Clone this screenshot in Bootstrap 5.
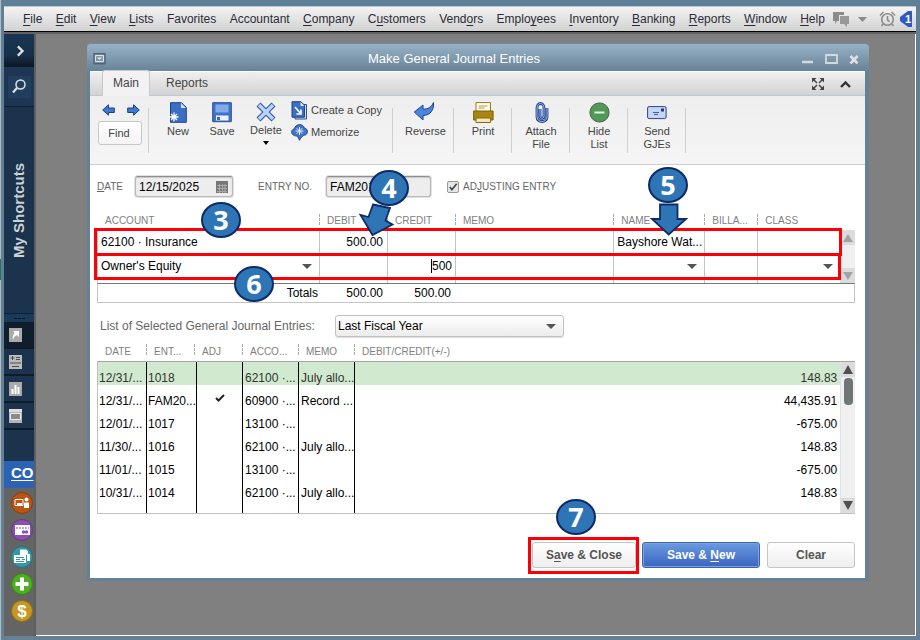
<!DOCTYPE html>
<html lang="en">
<head>
<meta charset="utf-8">
<meta name="viewport" content="width=device-width, initial-scale=1">
<title>Make General Journal Entries</title>
<link href="https://cdn.jsdelivr.net/npm/bootstrap@5.3.0/dist/css/bootstrap.min.css" rel="stylesheet">
<style>
body{font-family:"Liberation Sans",Arial,sans-serif;font-size:12px;line-height:14px;color:#000;background:#668196}
button,input,select{font-family:inherit;color:inherit}
svg{display:block;flex:none}
.app{min-height:100vh;padding:6px 4px 4px 4px;background:linear-gradient(#5d7f97,#668196) 1px 0 no-repeat,linear-gradient(#b9bcbf 259px,#1f7a45 259px 280px,#b9bcbf 280px)}
.menubar{height:26px;border-top:1px solid #bcc8d0;border-bottom:1px solid #000;background:linear-gradient(#f3f3f3,#d2d2d2);padding-left:19px;padding-right:4px}
.menubar nav{margin-right:8px}
.menubar a{color:#2c2c36;text-decoration:none}
.menubar a u,.btn u{text-underline-offset:2px}
.workspace{background:#808080;border-top:2px solid #636363}
.rail{width:32px;background:#646464;border-right:2px solid #5f5f5f}
.rail button{border:0;padding:0;color:#dde3e4;background:none;width:100%}
.rail .openbtn{height:33px;background:linear-gradient(#1b3552,#172f48 65%,#0b1722)}
.rail .findbtn{height:40px;background:#1c3653;border-bottom:1px solid #101f2e}
.findbtn span{width:23px;height:22px;background:#213e5f}
.rail .panel{background:#1b334d}
.vlabel{writing-mode:vertical-rl;transform:rotate(180deg);font-weight:700;font-size:15px;line-height:20px;color:#ccd1d5;height:206px;width:30px}
.grip{height:9px;background:#1a3a5c;border-top:1px solid #101f2e}
.rail .tool{height:27px;border-bottom:2px solid #0e1c2a;padding-left:5px}
.rail .tool.current{background:#101d2c}
.spacer{height:31px}
.co{height:27px;background:#2c62b4;color:#fff!important;font-weight:700;font-size:15px;line-height:24px;padding-left:7px;overflow:hidden;text-underline-offset:2px}
.rail .round{height:27px;padding:2px 0 0 7px}
.desk{padding:9px 45px 52px 51px;border-right:1px solid #fff;border-bottom:1px solid #fff}
.win{background:#fff;border:3px solid #668196;border-top:0;border-right-width:4px;border-radius:4px 4px 0 0;margin-right:1px}
.titlebar{margin:0 -4px 0 -3px;height:28px;border-top:1px solid #6f8ca3;border-radius:4px 4px 0 0;background:linear-gradient(#98b1c6,#678397);color:#fff;font-size:13px;padding:3px 10px 0 6px}
.titlebar button,.tabrow .mini{border:0;background:none;padding:0}
.titlebar .ctl{gap:11px;width:57px}
.tabrow{height:25px;background:linear-gradient(#efefef,#d3d3d3);border-top:1px solid #fff;border-bottom:1px solid #bcc7d4;padding:0 14px 0 12px}
.tabrow .nav-link{color:#444;padding:5px 15px 5px;line-height:14px;border:1px solid transparent;border-bottom:0}
.tabrow .nav-link.active{background:#f2f2f2;border-color:#c9c9c9;border-radius:3px 3px 0 0;padding:5px 10px 6px;color:#444;margin-bottom:-1px}
.ribbon{height:69px;background:linear-gradient(#eee,#f5f5f5);border-bottom:1px solid #cfcfcf;font-size:11px;line-height:13px;color:#444}
.ribbon .grp{height:69px;padding-top:6px;position:relative;flex:none}
.ribbon .grp::after{content:"";border-right:1px solid #cfcfcf;height:45px;margin-top:6px;position:absolute;right:0;top:6px}
.ribbon button{border:0;background:none;padding:0;text-align:center;display:flex;flex-direction:column;align-items:center}
.ribbon .item{width:44px}
.ribbon .item svg,.ribbon .one svg{margin-bottom:2px}
.ribbon .find{border:1px solid #c6c6c6;border-radius:3px;background:linear-gradient(#fff,#f4f4f4);width:44px;height:24px;justify-content:center;padding-right:2px}
.ribbon .arrows{padding:2px 9px 5px 4px}
.ribbon .side{flex-direction:row;gap:3px;height:22px}
.ribbon .pair{padding-left:3px;margin-top:-3px}
.w59{width:59px}.w244{width:244px;padding-left:7px}.w61{width:61px}.w58{width:58px}
.body{position:relative;padding:11px 10px 10px 7px}
.cap{font-size:10px;line-height:12px;color:#666}
.fld{border:1px solid #b9b9b9;border-top-color:#8f8f8f;border-radius:3px;background:#ededed;box-shadow:inset 0 1px 1px #c8c8c8,0 0 0 1px #e2e2e2;font-size:12px;height:21px;padding:0 3px;line-height:16px}
.datefld{width:98px}.nofld{width:105px}
.datelab{width:38px}.nolab{margin-left:25px;width:68px}
.cal{right:5px;top:5px}
.tick{appearance:none;width:12px;height:12px;margin:0;border:1px solid #999;border-radius:2px;background:#e6e6e6 url("data:image/svg+xml,%3Csvg xmlns='http://www.w3.org/2000/svg' viewBox='0 0 12 12'%3E%3Cpath d='M2.5 6l2.3 3L10 2.5' fill='none' stroke='%23444' stroke-width='1.8'/%3E%3C/svg%3E") center/11px}
.gridt{table-layout:fixed;width:100%;border-collapse:separate;border-spacing:0}
.gridt th{font-weight:400;font-size:10px;line-height:12px;color:#808080;padding:0 0 0 7px;position:relative;white-space:nowrap;vertical-align:top}
.gridt th+th::before{content:"";position:absolute;left:-1px;top:0;height:11px;border-left:1px dashed #aaa}
.gridt td{overflow:hidden;white-space:nowrap;padding:0}
.entrywrap{margin-top:17px}
.entry td{border-right:1px solid #c4c4c4;padding:0 3px;height:24px}
.entry td:first-child{border-left:1px solid #c4c4c4}
.entry td:last-child{border-right:0}
.entry .stub td{height:5px;line-height:0;border-top:1px solid #777}
.entry .head th{height:16px;padding-top:1px}
.entry .head th:first-child{padding-left:8px}
.pick{position:relative;display:block}
.pick::after{content:"";position:absolute;right:4px;top:50%;margin-top:-2px;border:5px solid transparent;border-top-color:#555;border-bottom:0;pointer-events:none}
.pick select,.amt{appearance:none;border:0;background:none;padding:0;width:100%;font-size:12px;line-height:14px;height:18px;outline:0}
.amt{background:linear-gradient(#000,#000) right 20px center/1px 14px no-repeat}
.sb{background:#f0f0f0;width:15px}
.sb button{border:0;padding:0;background:#dcdcdc;width:100%;height:15px;display:flex;align-items:center;justify-content:center}
.entrywrap .sb{margin-top:16px}
.totals{border:1px solid #c4c4c4;border-top-color:#777;height:20px;line-height:18px}
.totals span{text-align:right;flex:none}
.t1{width:221px;padding-right:1px}.t2{width:64px}.t3{width:68px}
.rangerow{padding:12px 0 7px 3px}
.listlab{color:#666;font-size:12px;width:235px}
.range{width:229px}
.range select{border:1px solid #c2c2c2;border-radius:3px;background:linear-gradient(#fff,#ececec);height:22px;padding:0 2px;box-shadow:0 1px 1px #ddd}
.range::after{right:8px}
.listhead{height:17px}
.gridt.listhead th{padding-top:2px}
.listhead th:first-child{padding-left:8px}
.journal{border:1px solid #c0c0c0;border-top-color:#a5a5a5;border-right:0}
.journal td{height:23px;padding:9px 1px 0;border-left:1px solid #000}
.journal td:first-child{border-left:0}
.journal td:last-child{padding-right:3px}
.journal .picked td{background:#d1e9cf;color:#333}
.journal td:nth-child(2),.journal td:nth-child(4),.journal td:nth-child(5){padding-left:2px}
.journal td:nth-child(2){padding-right:0;padding-left:1px}
.journal .chk{padding-top:2px}
.journal .tail td{height:13px;padding:0}
.thumb{width:9px;height:27px;border-radius:4px;background:#6f7775;margin:1px auto 0}
.foot{padding-top:28px;gap:6px}
.foot .btn{font-size:12px;font-weight:700;line-height:14px;height:26px;padding:0;border-radius:3px;border:1px solid #c5c5c5;color:#555;background:linear-gradient(#fff,#eee)}
.foot .btn.go{width:118px;color:#fff;border-color:#3c64a4;background:linear-gradient(#6a9be0,#3a63c0);box-shadow:inset 0 0 0 1px #79a3e4}
.foot .w104{width:104px}.foot .w88{width:88px;margin-left:1px}
.redbox{position:absolute;border:3px solid #fb0007;pointer-events:none}
.r1{left:4px;right:23px;top:63px;height:28px}
.r2{left:4px;right:24px;top:88px;height:27px}
.r3{inset:-5px -3px -6px -4px}
.step{position:absolute;width:40px;height:36px;border-radius:50%;border:2px solid #0f2b66;background:#2e75b6;color:#fff;font:700 27px/32px "Open Sans","Noto Sans",sans-serif;text-align:center}
.s3{left:111px;top:37px}.s4{left:279px;top:5px}.s5{left:558px;top:2px}.s6{left:144px;top:101px}.s7{left:466px;top:334px}
.arr{position:absolute;overflow:visible}
.a4{left:269px;top:38px}.a5{left:561px;top:38px}
</style>
</head>
<body>
<div class="app d-flex flex-column">
<header class="menubar d-flex align-items-center">
<nav class="d-flex flex-grow-1 justify-content-between" aria-label="Main menu">
<a href="#"><u>F</u>ile</a><a href="#"><u>E</u>dit</a><a href="#"><u>V</u>iew</a><a href="#"><u>L</u>ists</a><a href="#">Favorites</a><a href="#">Accountant</a><a href="#"><u>C</u>ompany</a><a href="#">C<u>u</u>stomers</a><a href="#">Vend<u>o</u>rs</a><a href="#">Emplo<u>y</u>ees</a><a href="#"><u>I</u>nventory</a><a href="#"><u>B</u>anking</a><a href="#"><u>R</u>eports</a><a href="#"><u>W</u>indow</a><a href="#"><u>H</u>elp</a>
</nav>
<div class="d-flex align-items-center">
<svg width="17" height="15" viewBox="0 0 17 15"><path d="M0 0h11v3H6v6H4l-2 3V9H0z" fill="#8b8b8b"/><path d="M7 4h9v8h-2v3l-3-3H7z" fill="#999"/></svg>
<svg class="ms-2 me-2" width="9" height="5" viewBox="0 0 9 5"><path d="M0 0h9L4.500 5z" fill="#8b8b8b"/></svg>
<svg class="ms-1" width="17" height="16" viewBox="0 0 17 16" fill="none" stroke="#8e8e8e" stroke-width="1.600"><circle cx="8.500" cy="8.500" r="5.800"/><path d="M8.500 5v4l2 1.500M1 4.500L4.500 1M16 4.500L12.500 1M4 13l-1.500 2M13 13l1.500 2"/></svg>
<svg class="ms-1" width="12" height="16" viewBox="0 0 12 16"><path d="M12 0H8L0 6v4l8 6h4z" fill="#3158c0"/><text x="5" y="12" fill="#fff" font-size="11" font-weight="700">1</text></svg>
</div>
</header>
<div class="workspace d-flex flex-grow-1">
<aside class="rail d-flex flex-column flex-shrink-0">
<button class="openbtn d-flex align-items-center justify-content-center" aria-label="Expand"><svg width="14" height="14" viewBox="0 0 12 12"><path d="M5 2l4 4-4 4" fill="none" stroke="#dfe3df" stroke-width="2"/></svg></button>
<button class="findbtn d-flex align-items-center justify-content-center" aria-label="Search"><span class="d-flex align-items-center justify-content-center"><svg width="14" height="15" viewBox="0 0 14 15" fill="none" stroke="#dfe3df"><circle cx="8.500" cy="5.500" r="4.500" stroke-width="1.500"/><path d="M5 9l-4 4.500" stroke-width="2.200"/></svg></span></button>
<div class="panel"><div class="vlabel d-flex align-items-center justify-content-center"><span>My Shortcuts</span></div>
<div class="grip d-flex justify-content-center align-items-center"><svg width="11" height="3"><path d="M0 1.500h11" stroke="#071626" stroke-width="1" stroke-dasharray="3 1"/></svg></div>
<button class="tool current d-flex align-items-center" aria-label="Shortcuts"><svg width="13" height="14"><path fill="#aaa" d="M0 0h13v14H0z"/><path d="M4 3h6v6L8 7.200Q5 8 4 12 3 8 5.600 5z" fill="#fff"/></svg></button>
<button class="tool d-flex align-items-center" aria-label="Balances"><svg width="13" height="14"><path fill="#bbb" d="M0 0h13v14H0z"/><path d="M1.500 3h4M3.500 1v4M7 2.500h4M7 4.500h4M1 8h11M3 11.500h7" stroke="#4c4c4c"/></svg></button>
<button class="tool d-flex align-items-center" aria-label="Reports"><svg width="13" height="14"><path fill="#aaa" d="M0 0h13v14H0z"/><path d="M3.500 12V7M6.500 12V3M9.500 12V5" stroke="#fff" stroke-width="2"/></svg></button>
<button class="tool d-flex align-items-center" aria-label="Open windows"><svg width="13" height="14"><path fill="#b5b5b5" d="M0 0h13v14H0z"/><path d="M1.500 4.500h10v6h-10z" fill="#8a8a8a" stroke="#eee"/><path d="M0 0h13v3H0z" fill="#ddd"/></svg></button>
<div class="spacer"></div></div>
<a href="#" class="co d-block">CO</a>
<button class="round d-flex align-items-center" aria-label="Payroll"><svg width="22" height="22" viewBox="0 0 22 22"><circle cx="11" cy="11" r="10.500" fill="#bd5412" stroke="#8d3c0a"/><path d="M4 7.500h8v6H4z" fill="none" stroke="#fff"/><path d="M6 11h5v2H6z" fill="#fff"/><circle cx="15.500" cy="7.500" r="2" fill="#fff"/><path d="M13 10.500h5V16h-5z" fill="#fff"/></svg></button>
<button class="round d-flex align-items-center" aria-label="Card payments"><svg width="22" height="22" viewBox="0 0 22 22"><circle cx="11" cy="11" r="10.500" fill="#8b4fb0" stroke="#6a3690"/><path d="M4 6h15v10H4z" fill="#fff"/><path d="M5 9h13" stroke="#8b4fb0" stroke-dasharray="2 1"/><circle cx="12.500" cy="13" r="1.700" fill="#8b4fb0"/><circle cx="15.500" cy="13" r="1.700" fill="#8b4fb0"/></svg></button>
<button class="round d-flex align-items-center" aria-label="Checks"><svg width="22" height="22" viewBox="0 0 22 22"><circle cx="11" cy="11" r="10.500" fill="#3698a5" stroke="#24737e"/><path d="M9 8V3.500h6l2 2V8h2v7h-3V9H9z" fill="#fff"/><path d="M3 9h12v8H3z" fill="#fff"/><path d="M5 11.500h8M5 13.500h4m2 0h3M5 15.500h8" stroke="#3698a5"/></svg></button>
<button class="round d-flex align-items-center" aria-label="Add"><svg width="22" height="22" viewBox="0 0 22 22"><circle cx="11" cy="11" r="10.500" fill="#4cae20" stroke="#378414"/><path d="M11 4.500v13M4.500 11h13" stroke="#fff" stroke-width="4"/></svg></button>
<button class="round d-flex align-items-center" aria-label="Money"><svg width="22" height="22" viewBox="0 0 22 22"><circle cx="11" cy="11" r="10.500" fill="#c69822" stroke="#947013"/><text x="11" y="17" text-anchor="middle" font-size="17" font-weight="700" fill="#fff">$</text></svg></button>
</aside>
<main class="desk flex-grow-1">
<section class="win">
<div class="titlebar d-flex align-items-center">
<button aria-label="Window menu"><svg width="13" height="12" viewBox="0 0 13 12"><path d="M1 .7h11v10H1z" fill="none" stroke="#4f6576" stroke-width="1.400"/><path d="M2.500 2.500h8v6h-8z" fill="none" stroke="#e0e4e8"/><path d="M4 4.500h5L6.500 7z" fill="#e0e4e8"/></svg></button>
<div class="flex-grow-1 text-center">Make General Journal Entries</div>
<div class="ctl d-flex align-items-center justify-content-between">
<button aria-label="Minimize"><svg width="11" height="10"><path d="M0 8h11" stroke="#d6d9dc" stroke-width="2.500"/></svg></button>
<button aria-label="Maximize"><svg width="13" height="10"><path d="M1 1h11v8H1z" fill="none" stroke="#d6d9dc" stroke-width="1.800"/></svg></button>
<button aria-label="Close"><svg width="10" height="9" viewBox="0 0 10 9"><path d="M1.500 1l7 7.500M8.500 1l-7 7.500" stroke="#dfe1e3" stroke-width="2.600"/></svg></button>
</div></div>
<div class="tabrow d-flex align-items-end">
<div class="nav" role="tablist"><a class="nav-link active" href="#">Main</a><a class="nav-link" href="#">Reports</a></div>
<div class="ms-auto d-flex align-items-center h-100 gap-3">
<button class="mini" aria-label="Full screen"><svg width="12" height="12" viewBox="0 0 12 12" fill="#444"><path d="M0 0h4.500L0 4.500zM12 0v4.500L7.500 0zM0 12V7.500L4.500 12zM12 12H7.500L12 7.500z"/><path d="M1 1l4 4M11 1L7 5M1 11l4-4M11 11L7 7" stroke="#444" stroke-width="1.500"/></svg></button>
<button class="mini" aria-label="Collapse"><svg width="11" height="8" viewBox="0 0 11 8"><path d="M1 7l4.500-4.500L10 7" fill="none" stroke="#333" stroke-width="2.400"/></svg></button></div>
</div>
<div class="ribbon d-flex">
<div class="grp w59 ps-2">
<div class="arrows d-flex justify-content-between"><button aria-label="Previous"><svg width="13" height="12" viewBox="0 0 13 12"><path d="M.7 6L6.500.8V4h5.800v4.500H6.500v2.700z" fill="#3f7ad0" stroke="#1d3f86"/></svg></button><button aria-label="Next"><svg width="13" height="12" viewBox="0 0 13 12"><path d="M12.300 6L6.500.8V4H.7v4.500h5.800v2.700z" fill="#3f7ad0" stroke="#1d3f86"/></svg></button></div>
<button class="find">Find</button></div>
<div class="grp w244 d-flex align-items-start">
<button class="item"><svg width="18" height="21" viewBox="0 0 18 21"><path d="M1.500.7h11l4.800 4.800v14.800H1.500z" fill="#3b6fc4" stroke="#1f4187"/><path d="M12 1v5h5z" fill="#cfe0f8"/><path d="M5 10.500v9M.5 15h9M2 12l6 6M8 12l-6 6" stroke="#fff" stroke-width="1.300"/></svg>New</button>
<button class="item"><svg width="20" height="21" viewBox="0 0 20 21"><path d="M.7.7h18.600v19H.7z" fill="#3f73ca" stroke="#2b4f96"/><path d="M3.500 2.500h13v8h-13z" fill="#83abea"/><path d="M4 13.500h12.500v5H4z" fill="#eef3fb"/><path d="M5 15h3v3H5z" fill="#3a65b5"/></svg>Save</button>
<button class="item"><svg width="20" height="20" viewBox="0 0 20 20"><path d="M2.500 2.500l15 15M17.500 2.500l-15 15" stroke="#2b50a0" stroke-width="5.600"/><path d="M3 3l14 14M17 3L3 17" stroke="#b9d4fa" stroke-width="3.600"/></svg>Delete<svg width="6" height="4" class="mt-1"><path d="M0 0h6L3 4z" fill="#000"/></svg></button>
<div class="pair">
<button class="side"><svg width="17" height="19" viewBox="0 0 17 19"><path d="M4 3.500h11.500v14.500H4z" fill="#d7e3f7" stroke="#2b4f96"/><path d="M1 .7h9l3.500 3.500v12H1z" fill="#3b6fc4" stroke="#1f4187"/><path d="M9.500 1v4h4z" fill="#dce8fa"/><path d="M4 6l6 7M10 8.500V13H5.500" stroke="#fff" stroke-width="1.600" fill="none"/></svg>Create a Copy</button>
<button class="side"><svg width="17" height="17" viewBox="0 0 17 17"><path d="M8 .8c3-.5 5 1.200 5.200 3.200 3 .5 4 3.300 2.800 5.300-.7 1.600-2.200 2-3.500 2-1 1.700-3 2.500-4 5-1-2-1-3.500-3-4.300C2.500 12 .3 10 .7 7.500 1 5.500 2.700 5 3.500 4.500 4 2 6 .8 8 .8z" fill="#3f73c6" stroke="#24468c"/><path d="M8.500 3v8M4.500 7h8M5.700 4.200l5.600 5.600M11.300 4.200L5.700 9.800" stroke="#eaf2ff"/></svg>Memorize</button></div></div>
<div class="grp w61"><button class="one w-100"><svg width="22" height="21" viewBox="0 0 22 21"><path d="M.8 11L9.500 4v4c5 .5 8.500-2 10.500-6.500.8 7-3 13-10.500 13V19z" fill="#4a84dc" stroke="#1d428c" transform="translate(.5 -1)"/></svg><span class="ps-1">Reverse</span></button></div>
<div class="grp w58"><button class="one w-100"><svg width="21" height="21" viewBox="0 0 21 21"><path d="M3 .6h14.500V10H3z" fill="#fffdf2" stroke="#9a7a12"/><path d="M5.500 4h9M5.500 6h6" stroke="#b99b35"/><path d="M.6 9h19.500v9H.6z" fill="#a98612" stroke="#7d6008"/><path d="M3 16h14.500v4.500H3z" fill="#f3e6b8" stroke="#8a6b0a"/></svg>Print</button></div>
<div class="grp w58"><button class="one w-100"><svg width="15" height="21" viewBox="0 0 15 21" fill="none"><g stroke="#1e3f8b" stroke-width="2.800"><path d="M13 6v9c0 6-10 6-10 0V6c0-6 7-6 7 0v8c0 3-4 3-4 0V7"/></g><path d="M13 6v9c0 6-10 6-10 0V6c0-6 7-6 7 0v8c0 3-4 3-4 0V7" stroke="#9fc0f4" stroke-width="1"/></svg>Attach<br>File</button></div>
<div class="grp w58"><button class="one w-100"><svg width="21" height="21" viewBox="0 0 21 21"><circle cx="10.500" cy="10.500" r="9.600" fill="#4f9a55" stroke="#555c55"/><path d="M5.500 10.500h10" stroke="#e4f2e2" stroke-width="2"/></svg>Hide<br>List</button></div>
<div class="grp w58"><button class="one w-100"><svg width="20" height="21" viewBox="0 0 20 21"><rect x=".6" y="4.600" width="18.500" height="12" rx="1.500" fill="#c4d5f5" stroke="#2d4582"/><path d="M14 6.500h3v3h-3z" fill="#263c78"/><path d="M6 10.500h6M7 12.500h4" stroke="#455c99"/></svg>Send<br>GJEs</button></div>
</div>
<div class="body">
<form class="d-flex align-items-center">
<label for="jdate" class="cap datelab"><u>D</u>ATE</label>
<div class="position-relative"><input id="jdate" class="fld datefld" value="12/15/2025"><svg class="cal position-absolute" width="12" height="12"><path fill="#777" d="M0 0h12v12H0z"/><path d="M1 4.500h10M1 7.500h10M1 10.500h10M3.500 3v9M6.500 3v9M9 3v9" stroke="#aaa"/></svg></div>
<label for="jno" class="cap nolab">ENTRY NO.</label>
<input id="jno" class="fld nofld" value="FAM201">
<input id="adj" type="checkbox" class="tick ms-3" checked><label for="adj" class="cap ms-1">AD<u>J</u>USTING ENTRY</label>
</form>
<div class="entrywrap d-flex">
<table class="gridt entry flex-grow-1">
<colgroup><col style="width:223px"><col style="width:68px"><col style="width:68px"><col><col style="width:91px"><col style="width:53px"><col style="width:82px"></colgroup>
<thead><tr class="head"><th>ACCOUNT</th><th>DEBIT</th><th>CREDIT</th><th>MEMO</th><th>NAME</th><th>BILLA...</th><th>CLASS</th></tr></thead>
<tbody>
<tr><td>62100 · Insurance</td><td class="text-end pe-1">500.00</td><td></td><td></td><td class="pe-0">Bayshore Wat...</td><td></td><td></td></tr>
<tr><td><span class="pick"><select aria-label="Account"><option>Owner's Equity</option></select></span></td><td></td><td><input class="amt text-end" aria-label="Credit" value="500"></td><td></td><td><span class="pick"><select aria-label="Name"><option></option></select></span></td><td></td><td><span class="pick"><select aria-label="Class"><option></option></select></span></td></tr>
<tr class="stub"><td></td><td></td><td></td><td></td><td></td><td></td><td></td></tr>
</tbody></table>
<div class="sb d-flex flex-column justify-content-between"><button aria-label="Scroll up"><svg width="10" height="8"><path d="M0 8L5 0l5 8z" fill="#a3a3a3"/></svg></button><button aria-label="Scroll down"><svg width="10" height="8"><path d="M0 0h10L5 8z" fill="#a3a3a3"/></svg></button></div>
</div>
<div class="totals d-flex"><span class="t1">Totals</span><span class="t2">500.00</span><span class="t3">500.00</span></div>
<div class="rangerow d-flex align-items-center"><label for="range" class="listlab">List of Selected General Journal Entries:</label><span class="pick range"><select id="range"><option>Last Fiscal Year</option></select></span></div>
<table class="gridt listhead"><colgroup><col style="width:50px"><col style="width:48px"><col style="width:48px"><col style="width:56px"><col style="width:56px"><col></colgroup><tbody><tr><th>DATE</th><th>ENT...</th><th>ADJ</th><th>ACCO...</th><th>MEMO</th><th>DEBIT/CREDIT(+/-)</th></tr></tbody></table>
<div class="journal d-flex">
<table class="gridt flex-grow-1">
<colgroup><col style="width:48px"><col style="width:50px"><col style="width:46px"><col style="width:56px"><col style="width:56px"><col></colgroup>
<tbody>
<tr class="picked"><td>12/31/...</td><td>1018</td><td></td><td>62100 ·...</td><td>July allo...</td><td class="text-end">148.83</td></tr>
<tr><td>12/31/...</td><td>FAM20...</td><td class="chk"><svg class="mx-auto" width="10" height="8" viewBox="0 0 10 8"><path d="M1 4l2.500 2.500L9 1" fill="none" stroke="#222" stroke-width="2"/></svg></td><td>60900 ·...</td><td>Record ...</td><td class="text-end">44,435.91</td></tr>
<tr><td>12/01/...</td><td>1017</td><td></td><td>13100 ·...</td><td></td><td class="text-end">-675.00</td></tr>
<tr><td>11/30/...</td><td>1016</td><td></td><td>62100 ·...</td><td>July allo...</td><td class="text-end">148.83</td></tr>
<tr><td>11/01/...</td><td>1015</td><td></td><td>13100 ·...</td><td></td><td class="text-end">-675.00</td></tr>
<tr><td>10/31/...</td><td>1014</td><td></td><td>62100 ·...</td><td>July allo...</td><td class="text-end">148.83</td></tr>
<tr class="tail"><td></td><td></td><td></td><td></td><td></td><td></td></tr>
</tbody></table>
<div class="sb d-flex flex-column border-start"><button aria-label="Scroll up"><svg width="10" height="9"><path d="M0 9L5 0l5 9z" fill="#505050"/></svg></button><div class="thumb"></div><button class="mt-auto" aria-label="Scroll down"><svg width="10" height="9"><path d="M0 0h10L5 9z" fill="#505050"/></svg></button></div>
</div>
<div class="foot d-flex justify-content-end">
<div class="position-relative"><button class="btn w104">S<u>a</u>ve &amp; Close</button><div class="redbox r3"></div></div>
<button class="btn go">Save &amp; <u>N</u>ew</button><button class="btn w88">Clear</button>
</div>
<div class="redbox r1"></div><div class="redbox r2"></div>
<svg class="arr a4" width="34" height="34" viewBox="0 0 34 34"><path d="M14 1.500l17 3.500-4.500 12.500 7 4L13.500 32 1.500 12l8 2z" fill="#2e75b6" stroke="#0f2b66" stroke-width="1.800"/></svg>
<svg class="arr a5" width="36" height="34" viewBox="0 0 36 34"><path d="M9 1.500h17.500V16H35L17.700 31.500 1 16h8z" fill="#2e75b6" stroke="#0f2b66" stroke-width="1.800"/></svg>
<div class="step s3">3</div><div class="step s4">4</div><div class="step s5">5</div><div class="step s6">6</div><div class="step s7">7</div>
</div>
</section>
</main>
</div>
</div>
<script src="https://cdn.jsdelivr.net/npm/bootstrap@5.3.0/dist/js/bootstrap.bundle.min.js"></script>
</body>
</html>
